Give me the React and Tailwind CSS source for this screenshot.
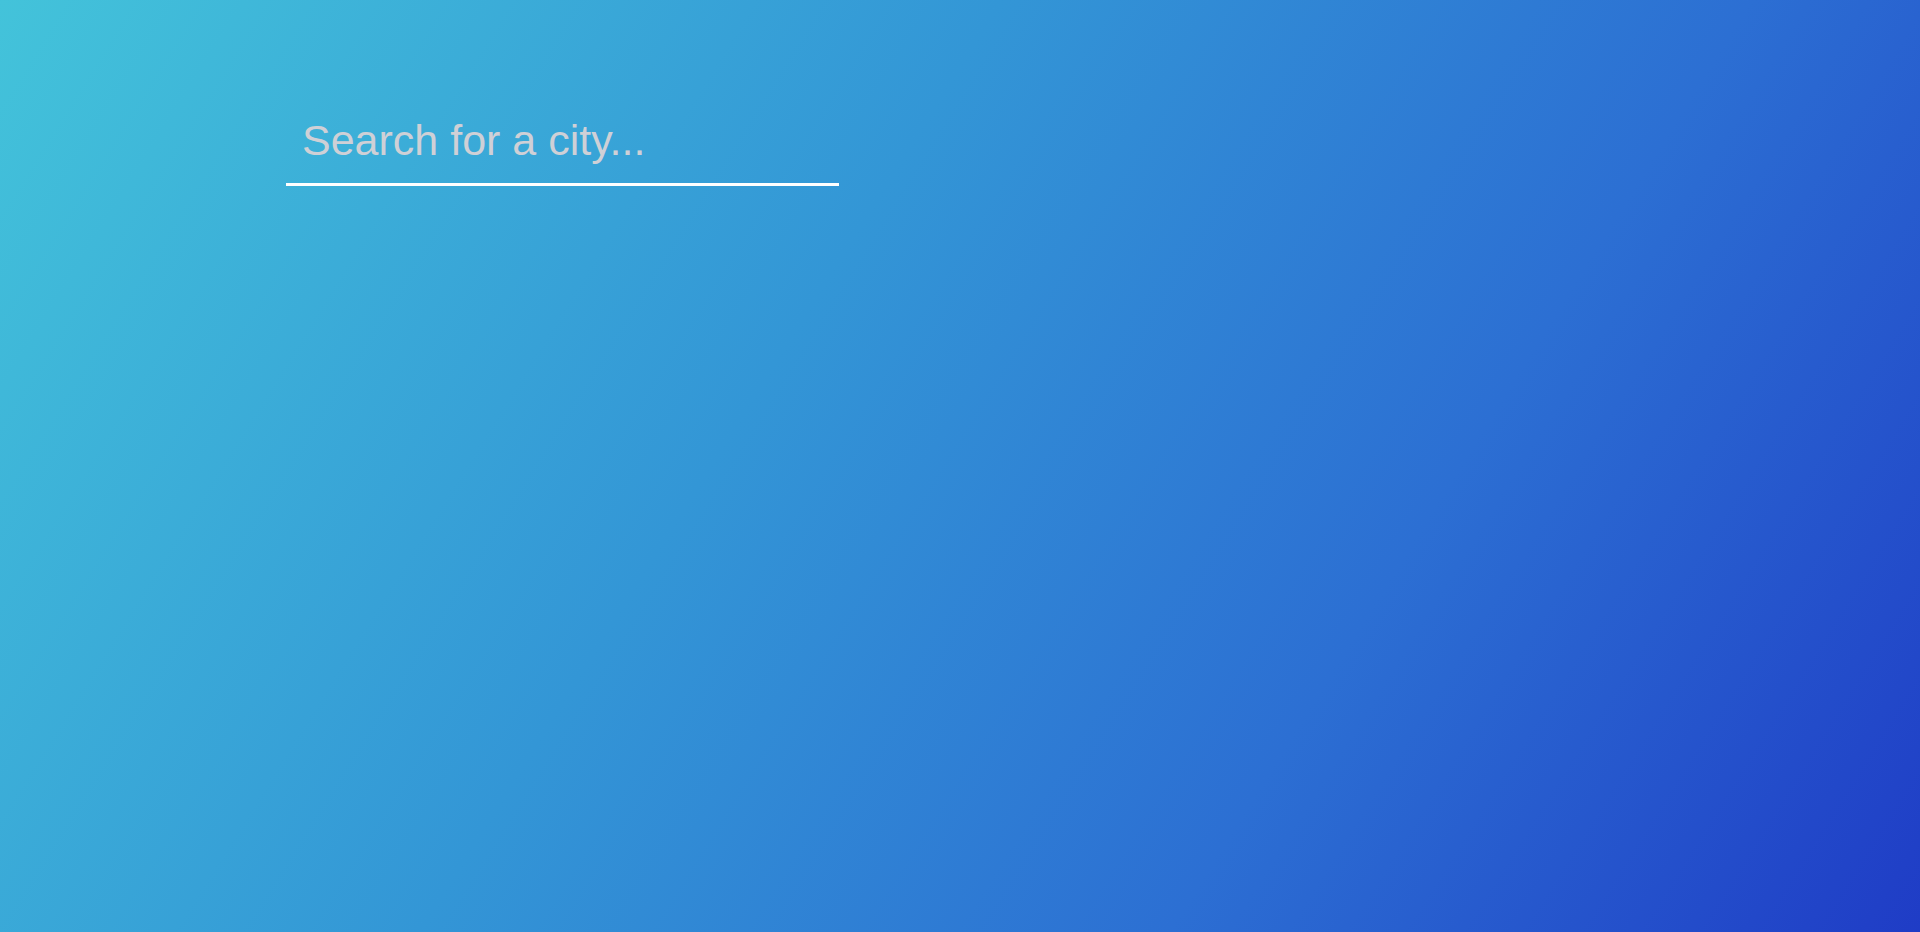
export default function App() {
  return (
    <div className="min-h-screen w-full bg-[linear-gradient(122deg,#43c3da_0%,#3396d6_40%,#2c6fd3_70%,#1f3cc6_100%)] font-['Liberation_Sans',Arial,sans-serif]">
      <div className="pl-[286px] pt-[98px]">
        <input
          type="text"
          placeholder="Search for a city..."
          className="w-[553px] bg-transparent border-0 border-b-[3px] border-white pt-[18px] pb-[18px] pl-[16px] text-[43px] leading-[49px] text-white placeholder:text-[#cfd0d6] outline-none"
        />
      </div>
    </div>
  )
}
